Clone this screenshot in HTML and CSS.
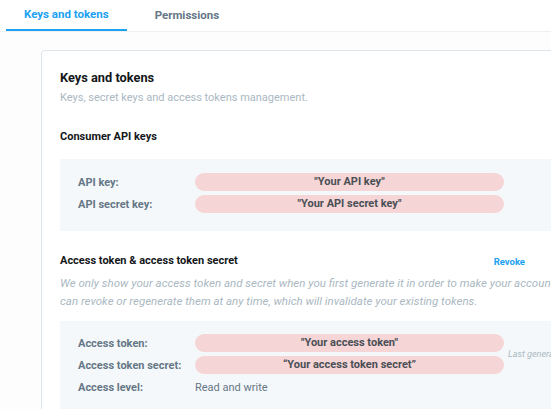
FILE: index.html
```html
<!DOCTYPE html>
<html>
<head>
<meta charset="utf-8">
<link rel="stylesheet" href="styles.css">
</head>
<body>
<div class="tabs">
  <div class="tab active">Keys and tokens</div>
  <div class="tab">Permissions</div>
</div>
<div class="page">
  <div class="card">
    <h1 class="title">Keys and tokens</h1>
    <p class="subtitle">Keys, secret keys and access tokens management.</p>
    <h2 class="section">Consumer API keys</h2>
    <div class="box box-keys">
      <div class="row">
        <div class="label">API key:</div>
        <div class="pill">"Your API key"</div>
      </div>
      <div class="row">
        <div class="label">API secret key:</div>
        <div class="pill">"Your API secret key"</div>
      </div>
    </div>
    <div class="section-head">
      <h2 class="section">Access token &amp; access token secret</h2>
      <a class="revoke">Revoke</a>
    </div>
    <p class="desc">We only show your access token and secret when you first generate it in order to make your account more secure. You can revoke or regenerate them at any time, which will invalidate your existing tokens.</p>
    <div class="box box-tokens">
      <div class="rows">
        <div class="row">
          <div class="label">Access token:</div>
          <div class="pill">"Your access token"</div>
        </div>
        <div class="row">
          <div class="label">Access token secret:</div>
          <div class="pill">“Your access token secret”</div>
        </div>
        <div class="row">
          <div class="label">Access level:</div>
          <div class="value">Read and write</div>
        </div>
      </div>
      <div class="generated">Last generated on this date</div>
    </div>
  </div>
</div>
</body>
</html>
```
FILE: styles.css
```css
html, body {
  margin: 0;
  padding: 0;
  overflow: hidden;
  background: #ffffff;
  font-family: Roboto, "Noto Sans", sans-serif;
  color: #14171a;
}
.tabs {
  display: flex;
  height: 31px;
  padding-left: 6px;
  border-bottom: 1px solid #eef1f3;
  width: 800px;
}
.tab {
  padding: 0 18px;
  line-height: 30px;
  font-size: 11.5px;
  font-weight: 700;
  color: #657786;
  margin-right: 10px;
}
.tab.active {
  color: #1da1f2;
  border-bottom: 2px solid #1da1f2;
  line-height: 29px;
}
.page {
  padding: 18px 0 0 41px;
  background: #fdfdfd;
  width: 800px;
}
.card {
  width: 720px;
  background: #fff;
  border: 1px solid #dde4ea;
  border-radius: 4px;
  padding: 19px 0 30px 18px;
}
.title {
  margin: 0;
  font-size: 12.8px;
  font-weight: 700;
  line-height: 16px;
}
.subtitle {
  margin: 5px 0 0;
  font-size: 11px;
  line-height: 14px;
  color: #aab8c2;
}
.section {
  margin: 0;
  font-size: 11px;
  font-weight: 700;
  line-height: 14px;
}
.card > .section {
  margin-top: 25px;
}
.box {
  background: #f5f8fa;
  margin-top: 15px;
  padding: 14px 0 18px 18px;
}
.rows {
  display: flex;
  flex-direction: column;
  gap: 4px;
}
.box-keys {
  display: flex;
  flex-direction: column;
  gap: 4px;
  padding-bottom: 18px;
}
.row {
  display: flex;
  align-items: center;
  height: 18px;
}
.label {
  width: 117px;
  font-size: 11px;
  font-weight: 700;
  color: #657786;
}
.pill {
  width: 309px;
  height: 18px;
  line-height: 18px;
  border-radius: 9px;
  background: #f5d5d5;
  text-align: center;
  font-size: 11px;
  font-weight: 700;
  color: #4a4f55;
}
.value {
  font-size: 11px;
  color: #657786;
}
.section-head {
  display: flex;
  justify-content: space-between;
  width: 465px;
  margin-top: 23px;
  align-items: center;
}
.revoke {
  font-size: 9.5px;
  font-weight: 700;
  color: #1da1f2;
}
.desc {
  margin: 6px 0 0;
  width: 595px;
  font-size: 11.5px;
  font-style: italic;
  line-height: 18px;
  color: #aab8c2;
}
.box-tokens {
  display: flex;
  align-items: flex-start;
  margin-top: 11px;
  padding-top: 13px;
}
.generated {
  margin-left: 4px;
  margin-top: 15px;
  font-size: 9px;
  font-style: italic;
  color: #aab8c2;
  white-space: nowrap;
}
```
